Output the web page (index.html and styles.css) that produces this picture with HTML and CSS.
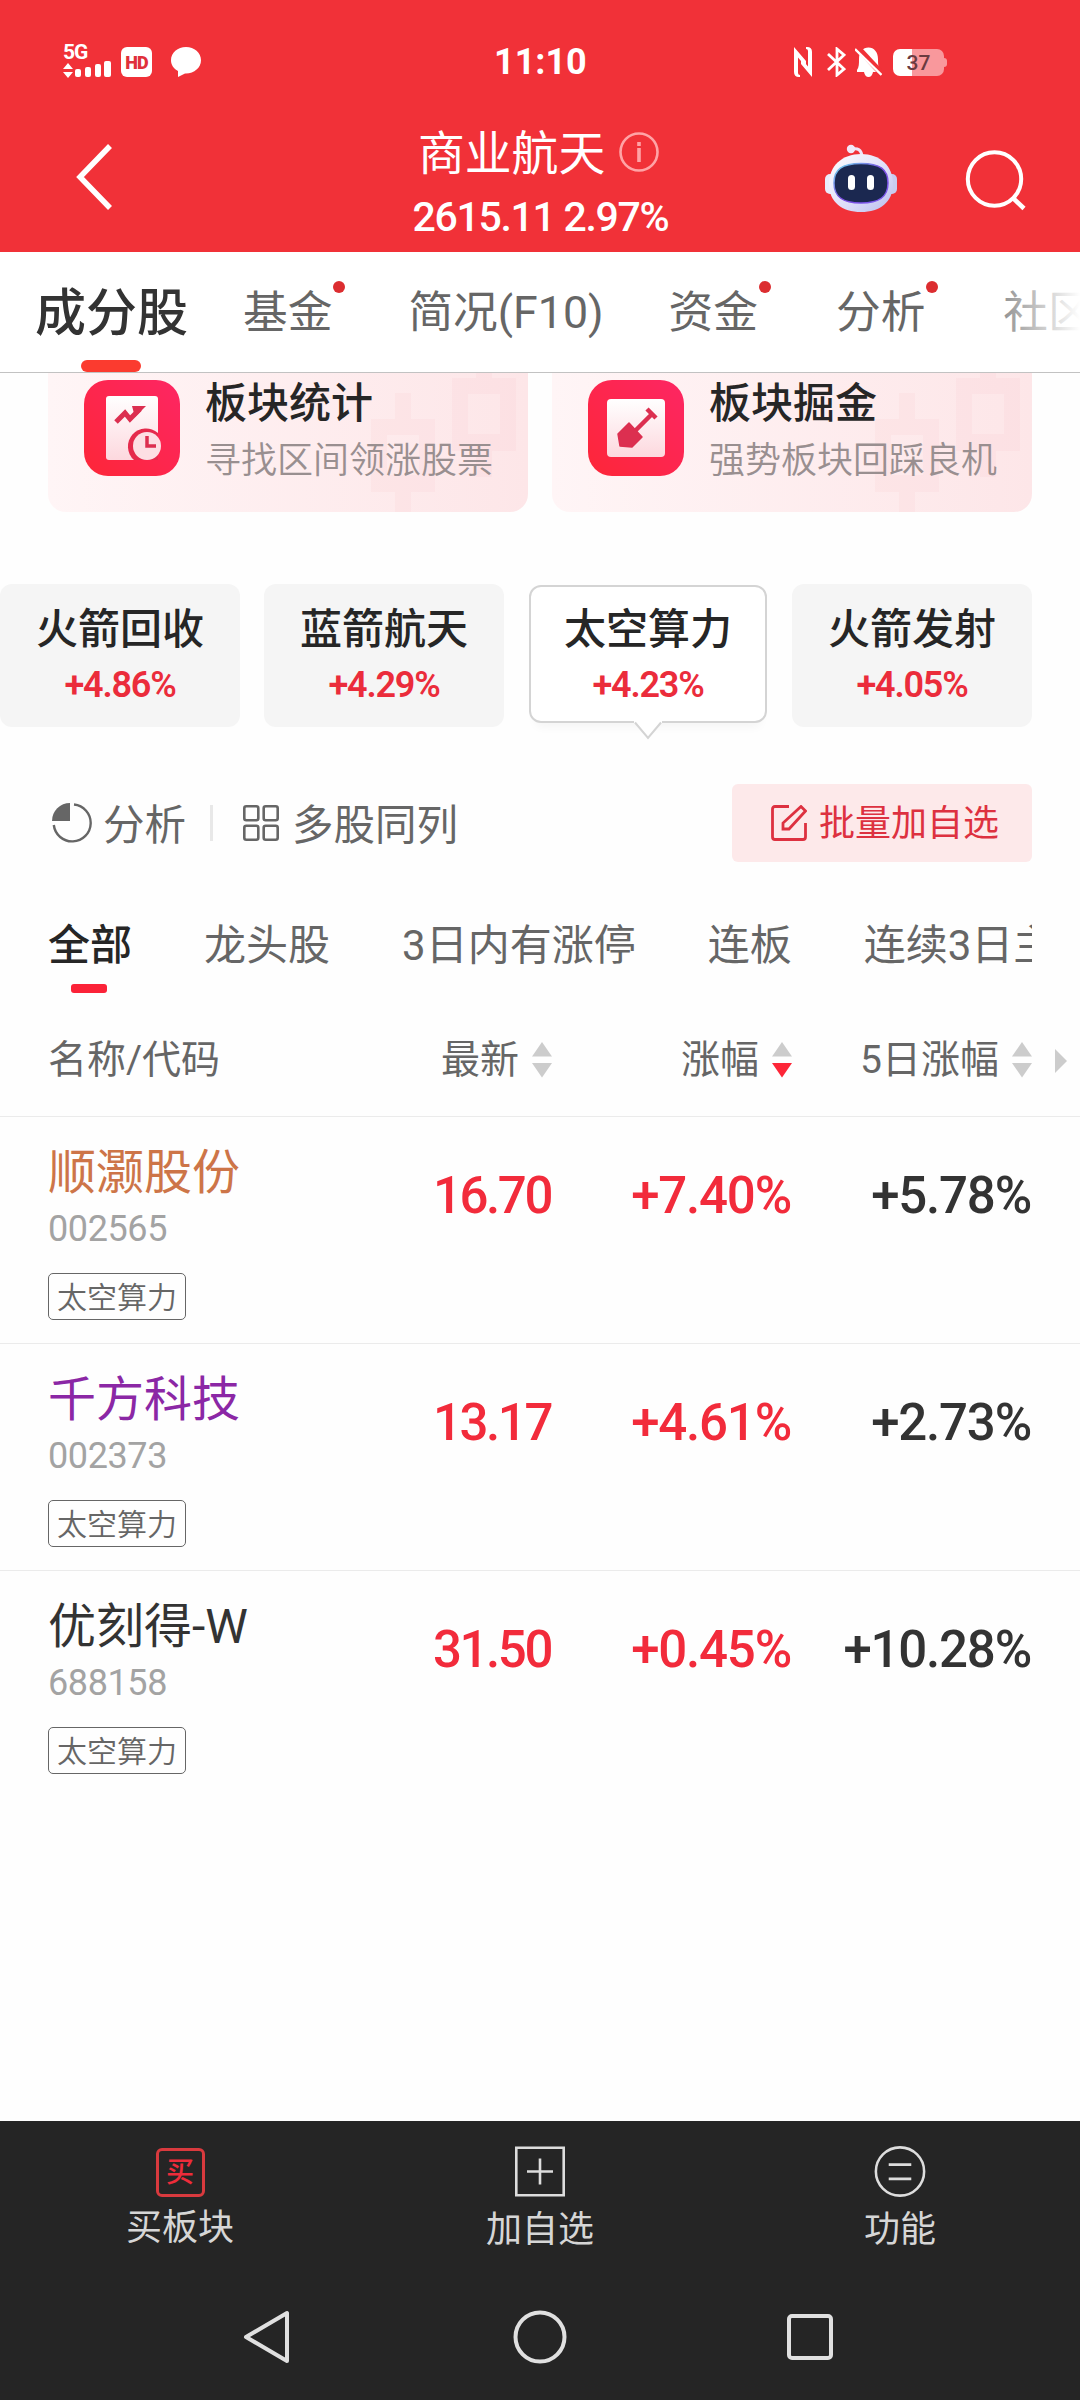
FILE: index.html
```html
<!DOCTYPE html>
<html lang="zh-CN">
<head>
    <meta charset="UTF-8">
    <meta name="viewport" content="width=device-width, initial-scale=1.0">
    <title>商业航天</title>
    <link rel="stylesheet" href="styles.css">
</head>
<body>
    <header class="header">
        <div class="status-bar">
            <div class="status-left">
                <div class="signal">
                    <span class="signal-type">5G</span>
                    <svg width="48" height="17" viewBox="0 -1 48 17" fill="#fff">
                        <path d="M0 7l5-6 5 6zM0 10h10l-5 6z"/>
                        <rect x="12" y="7" width="6" height="8" rx="2"/>
                        <rect x="22" y="5" width="6" height="10" rx="2"/>
                        <rect x="32" y="2" width="6" height="13" rx="2"/>
                        <rect x="41" y="-1" width="7" height="16" rx="2"/>
                    </svg>
                </div>
                <span class="hd">HD</span>
                <svg class="bubble" width="30" height="30" viewBox="0 0 30 30" fill="#fff">
                    <path d="M15 0C6.700 0 0 5.800 0 13.200c0 4.500 2.600 8.400 7 10.800V30l7-3.600h1c8.300 0 15-5.800 15-13.200S23.300 0 15 0z"/>
                </svg>
            </div>
            <span class="time">11:10</span>
            <div class="status-right">
                <svg width="18" height="30" viewBox="0 0 18 30" fill="#fff">
                    <path d="M0 0l12 14v6L4 10.500V26q0 2 2 2v2H5q-5 0-5-5zM18 30L7 17v-6l7 8.500V4q0-2-2-2V0h1q5 0 5 5z"/>
                </svg>
                <svg width="19" height="30" viewBox="0 0 19 30" fill="none" stroke="#fff" stroke-width="2.800">
                    <path d="M1 7l16 15-7 6V2l7 6L1 23"/>
                </svg>
                <svg width="27" height="30" viewBox="0 0 27 30">
                    <path d="M2 23c2-3 2-6 2-11C4 5 8 .5 13.500.5S23 5 23 12c0 5 0 8 2 11v2h-7q-1 5-4.500 5T9 25H2z" fill="#fff"/>
                    <path d="M1 -1l26 28" stroke="#f13138" stroke-width="6"/>
                    <path d="M0 2l26.500 26" stroke="#fff" stroke-width="2.400"/>
                </svg>
                <div class="battery">37</div>
            </div>
        </div>
        <div class="title-bar">
            <svg class="back" width="36" height="66" viewBox="0 0 36 66" fill="none" stroke="#fff" stroke-width="5.500">
                <path d="M34 2L4 33l30 31"/>
            </svg>
            <div class="title">
                <div class="title-name">
                    商业航天
                    <svg width="40" height="40" viewBox="0 0 40 40" fill="none" stroke="#ffa3a6" stroke-width="2.600">
                        <circle cx="20" cy="20" r="18.500"/>
                        <path d="M20 16v14M20 10v4" stroke-width="3.600"/>
                    </svg>
                </div>
                <div class="title-index">2615.11 2.97%</div>
            </div>
            <svg class="robot" width="72" height="68" viewBox="0 0 72 68">
                <defs>
                    <linearGradient id="shell" x1="0" y1="0" x2="1" y2="1">
                        <stop offset="0" stop-color="#fff"/>
                        <stop offset=".6" stop-color="#dcdcf8"/>
                        <stop offset="1" stop-color="#b9bdec"/>
                    </linearGradient>
                    <linearGradient id="rim" x1="0" y1="0" x2="1" y2="1">
                        <stop offset="0" stop-color="#6fe0f0"/>
                        <stop offset=".5" stop-color="#7a4be0"/>
                        <stop offset="1" stop-color="#7d5cf0"/>
                    </linearGradient>
                </defs>
                <path d="M27 5q9-2 10 7" fill="none" stroke="#f0e4f8" stroke-width="3"/>
                <circle cx="26" cy="5" r="4.200" fill="#f2e8f8"/>
                <rect x="0" y="30" width="12" height="20" rx="5" fill="#e9ecfb"/>
                <rect x="60" y="30" width="12" height="20" rx="5" fill="#c9ccf0"/>
                <path d="M36 10C17 10 4 22 4 40s13 28 32 28 32-10 32-28-13-30-32-30z" fill="url(#shell)"/>
                <path d="M36 19.500c-19 0-27 6-27 19.500s8 20 27 20 27-6.500 27-20-8-19.500-27-19.500z" fill="#1b2850" stroke="url(#rim)" stroke-width="1.500"/>
                <rect x="23" y="31" width="7" height="15" rx="3.500" fill="#fff"/>
                <rect x="42" y="31" width="7" height="15" rx="3.500" fill="#fff"/>
            </svg>
            <svg class="search" width="62" height="62" viewBox="0 0 62 62" fill="none" stroke="#fff" stroke-width="4">
                <circle cx="29.500" cy="30" r="26.700"/>
                <path d="M48 49l11 10.500" stroke-width="4.500"/>
            </svg>
        </div>
    </header>

    <nav class="tabs">
        <span class="tab active">成分股</span>
        <span class="tab dot">基金</span>
        <span class="tab profile">简况(F10)</span>
        <span class="tab dot">资金</span>
        <span class="tab dot">分析</span>
        <span class="tab">社区</span>
    </nav>

    <main>
        <section class="cards">
            <div class="card">
                <svg class="candles" width="145" height="139" viewBox="0 0 145 139" fill="#fbc4cb" fill-opacity=".15">
                    <path fill-rule="evenodd" d="M0 46h64v73H0zM16 62v40h32V62zM24 20h16v26H24zM24 119h16v20H24z"/>
                    <path fill-rule="evenodd" d="M81 5h64v73H81zM97 21v40h32V21zM105 0h16v5h-16zM105 78h16v26h-16z"/>
                </svg>
                <svg width="96" height="96" viewBox="0 0 96 96">
                    <defs>
                        <linearGradient id="red" x1="0" y1="1" x2="1" y2="0">
                            <stop offset="0" stop-color="#fd2638"/>
                            <stop offset="1" stop-color="#fd2663"/>
                        </linearGradient>
                        <linearGradient id="paper" x1="0" y1="0" x2="0" y2="1">
                            <stop offset="0" stop-color="#fff"/>
                            <stop offset="1" stop-color="#fdd8de"/>
                        </linearGradient>
                    </defs>
                    <rect width="96" height="96" rx="24" fill="url(#red)"/>
                    <rect x="22" y="16" width="52" height="64" rx="3" fill="url(#paper)"/>
                    <path d="M32 42l9-9 5 6 10-10" fill="none" stroke="#dc2f50" stroke-width="5"/>
                    <path d="M48 26h14L51 37z" fill="#dc2f50"/>
                    <path d="M50 80a18 18 0 1 1 24-27v27z" fill="#e52a4c"/>
                    <circle cx="63" cy="66" r="14" fill="#fddfe4"/>
                    <path d="M63 56v10h9" fill="none" stroke="#dc2f50" stroke-width="3.500"/>
                </svg>
                <div class="card-text">
                    <div class="card-title">板块统计</div>
                    <div class="card-desc">寻找区间领涨股票</div>
                </div>
            </div>
            <div class="card">
                <svg class="candles" width="145" height="139" viewBox="0 0 145 139" fill="#fbc4cb" fill-opacity=".15">
                    <path fill-rule="evenodd" d="M0 46h64v73H0zM16 62v40h32V62zM24 20h16v26H24zM24 119h16v20H24z"/>
                    <path fill-rule="evenodd" d="M81 5h64v73H81zM97 21v40h32V21zM105 0h16v5h-16zM105 78h16v26h-16z"/>
                </svg>
                <svg width="96" height="96" viewBox="0 0 96 96">
                    <rect width="96" height="96" rx="24" fill="url(#red)"/>
                    <rect x="19" y="19" width="58" height="58" rx="4" fill="url(#paper)"/>
                    <path d="M46 52l18-18M59 29l9 9" fill="none" stroke="#dc2f50" stroke-width="4.500"/>
                    <path d="M41 43l13 14-10 10-12-1-2-12z" fill="#dc2f50" stroke="#dc2f50" stroke-width="1.500" stroke-linejoin="round"/>
                </svg>
                <div class="card-text">
                    <div class="card-title">板块掘金</div>
                    <div class="card-desc">强势板块回踩良机</div>
                </div>
            </div>
        </section>

        <section class="chips">
            <div class="chip"><b>火箭回收</b><span>+4.86%</span></div>
            <div class="chip"><b>蓝箭航天</b><span>+4.29%</span></div>
            <div class="chip selected">
                <b>太空算力</b><span>+4.23%</span>
                <svg class="pointer" width="28" height="19" viewBox="0 0 28 19">
                    <path d="M0 0h28v2h-1L14 17 1 2H0z" fill="#fff"/>
                    <path d="M1 1.500L14 17 27 1.500" fill="none" stroke="#d4d4d4" stroke-width="2"/>
                </svg>
            </div>
            <div class="chip"><b>火箭发射</b><span>+4.05%</span></div>
        </section>

        <section class="toolbar">
            <svg width="40" height="40" viewBox="0 0 40 40">
                <path d="M18 18H0A18 18 0 0 1 18 0z" fill="#666"/>
                <path d="M22 1.500A18.500 18.500 0 1 1 1.800 22" fill="none" stroke="#666" stroke-width="2.400"/>
            </svg>
            <span class="tool-label analysis">分析</span>
            <i class="divider"></i>
            <svg width="36" height="36" viewBox="0 0 36 36" fill="none" stroke="#666" stroke-width="2.600">
                <rect x="1.300" y="1.300" width="14" height="14" rx="2"/>
                <rect x="20.700" y="1.300" width="14" height="14" rx="2"/>
                <rect x="1.300" y="20.700" width="14" height="14" rx="2"/>
                <rect x="20.700" y="20.700" width="14" height="14" rx="2"/>
            </svg>
            <span class="tool-label multi">多股同列</span>
            <div class="batch-button">
                <svg width="36" height="36" viewBox="0 0 36 36" fill="none" stroke="#dd3140" stroke-width="2.800">
                    <path d="M18 1.500H4Q1.500 1.500 1.500 4v28q0 2.500 2.500 2.500h28q2.500 0 2.500-2.500V18"/>
                    <path d="M12 24v-6L30 1.500l4.500 4.500L18 24z"/>
                </svg>
                <span>批量加自选</span>
            </div>
        </section>

        <section class="filters">
            <span class="filter active">全部</span>
            <span class="filter">龙头股</span>
            <span class="filter">3日内有涨停</span>
            <span class="filter">连板</span>
            <span class="filter">连续3日主力</span>
        </section>

        <section class="table">
            <div class="row head">
                <div class="col">名称/代码</div>
                <div class="col num">最新<svg width="20" height="36" viewBox="0 0 20 36" fill="#ccc"><path d="M0 14.500L10 0l10 14.500z"/><path d="M0 21h20L10 35.500z"/></svg></div>
                <div class="col num">涨幅<svg width="20" height="36" viewBox="0 0 20 36" fill="#ccc"><path d="M0 14.500L10 0l10 14.500z"/><path d="M0 21h20L10 35.500z" fill="#fd2638"/></svg></div>
                <div class="col num">5日涨幅<svg width="20" height="36" viewBox="0 0 20 36" fill="#ccc"><path d="M0 14.500L10 0l10 14.500z"/><path d="M0 21h20L10 35.500z"/></svg></div>
                <svg class="more" width="12" height="24" viewBox="0 0 12 24" fill="#ccc"><path d="M0 0l12 12L0 24z"/></svg>
            </div>
            <div class="row">
                <div class="col">
                    <div class="name orange">顺灏股份</div>
                    <div class="code">002565</div>
                    <span class="tag">太空算力</span>
                </div>
                <div class="col num red">16.70</div>
                <div class="col num percent red">+7.40%</div>
                <div class="col num percent">+5.78%</div>
            </div>
            <div class="row">
                <div class="col">
                    <div class="name purple">千方科技</div>
                    <div class="code">002373</div>
                    <span class="tag">太空算力</span>
                </div>
                <div class="col num red">13.17</div>
                <div class="col num percent red">+4.61%</div>
                <div class="col num percent">+2.73%</div>
            </div>
            <div class="row">
                <div class="col">
                    <div class="name">优刻得-W</div>
                    <div class="code">688158</div>
                    <span class="tag">太空算力</span>
                </div>
                <div class="col num red">31.50</div>
                <div class="col num percent red">+0.45%</div>
                <div class="col num percent">+10.28%</div>
            </div>
        </section>
    </main>

    <footer class="footer">
        <div class="actions">
            <div class="action">
                <span class="buy-icon">买</span>
                买板块
            </div>
            <div class="action low">
                <svg width="50" height="50" viewBox="0 0 50 50" fill="none" stroke="#ddd" stroke-width="2.600">
                    <path d="M1.300 1.300h47.400v47.400H1.300zM25 12v26M12 25h26"/>
                </svg>
                加自选
            </div>
            <div class="action low">
                <svg width="52" height="52" viewBox="0 0 52 52" fill="none" stroke="#ddd" stroke-width="2.600">
                    <circle cx="26" cy="26" r="24.600"/>
                    <path d="M14.500 19h23M14.500 33.500h23" stroke-width="3"/>
                </svg>
                功能
            </div>
        </div>
        <div class="system-nav">
            <svg width="54" height="54" viewBox="0 0 54 54" fill="none" stroke="#e0e0e0" stroke-width="4" stroke-linejoin="round">
                <path d="M44 3v48L3 27z"/>
            </svg>
            <svg width="54" height="54" viewBox="0 0 54 54" fill="none" stroke="#e0e0e0" stroke-width="4">
                <circle cx="27" cy="27" r="24.500"/>
            </svg>
            <svg width="54" height="54" viewBox="0 0 54 54" fill="none" stroke="#e0e0e0" stroke-width="4">
                <rect x="6" y="6" width="42" height="42" rx="3"/>
            </svg>
        </div>
    </footer>
</body>
</html>
```
FILE: styles.css
```css
/* Global Styles */
* {
    box-sizing: border-box;
}

body {
    font-family: Roboto, "Noto Sans CJK SC", sans-serif;
    font-weight: 400;
    margin: 0;
    width: 1080px;
    height: 2400px;
    display: flex;
    flex-direction: column;
    background: #fefefe;
    color: #333;
    overflow: hidden;
    white-space: nowrap;
}

svg {
    display: block;
    flex: none;
}

/* Header */
.header {
    height: 252px;
    background: #f13138;
    color: #fff;
}

.status-bar {
    height: 124px;
    display: grid;
    grid-template-columns: 1fr auto 1fr;
    align-items: center;
    padding: 0 133px 0 63px;
}

.status-left,
.status-right {
    display: flex;
    align-items: center;
}

.status-left {
    width: 361px;
}

.signal {
    width: 48px;
    height: 34px;
    margin-top: -2px;
}

.signal-type {
    display: block;
    font-size: 21px;
    font-weight: 700;
    line-height: 17px;
    letter-spacing: -1px;
}

.hd {
    width: 31px;
    height: 30px;
    margin-left: 10px;
    border-radius: 6px;
    background: #fff;
    color: #e0303a;
    font-size: 18px;
    font-weight: 900;
    line-height: 31px;
    letter-spacing: -1px;
    text-align: center;
}

.bubble {
    margin-left: 19px;
}

.time {
    font-size: 36px;
    font-weight: 700;
    line-height: 40px;
    margin-left: 70px;
}

.status-right {
    justify-content: flex-end;
    gap: 11px;
}

.status-right svg:nth-child(1) {
    margin-right: 4px;
}

.status-right svg:nth-child(2) {
    margin-right: -2px;
}

.battery {
    position: relative;
    width: 51px;
    height: 27px;
    margin-right: 3px;
    border-radius: 7px;
    background: linear-gradient(90deg, #fff 37%, #f9989c 37%);
    color: #6b3b40;
    font-size: 21px;
    font-weight: 500;
    line-height: 28px;
    text-align: center;
}

.battery::after {
    content: "";
    position: absolute;
    right: -3px;
    top: 9px;
    width: 3px;
    height: 9px;
    border-radius: 0 3px 3px 0;
    background: #f9989c;
}

.title-bar {
    height: 128px;
    display: flex;
    align-items: flex-start;
    padding-left: 76px;
}

.back {
    margin-top: 20px;
}

.title {
    width: 300px;
    margin-left: 278px;
}

.title-name {
    display: flex;
    align-items: center;
    gap: 14px;
    padding-left: 28px;
    font-size: 46.800px;
    line-height: 60px;
}

.title-name svg {
    margin-top: -4px;
}

.title-index {
    margin-top: 9px;
    font-size: 41px;
    font-weight: 500;
    line-height: 48px;
    letter-spacing: -1.300px;
    text-align: center;
    padding-left: 1px;
}

.robot {
    margin: 20px 0 0 135px;
}

.search {
    margin: 25px 0 0 68px;
}

/* Tabs */
.tabs {
    position: relative;
    height: 121px;
    display: flex;
    align-items: center;
    padding: 2px 0 0 35px;
    border-bottom: 1px solid #c2c2c2;
    background: #fff;
    color: #666;
    overflow: hidden;
}

.tabs::after {
    content: "";
    position: absolute;
    right: 0;
    top: 0;
    width: 110px;
    height: 120px;
    background: linear-gradient(90deg, rgba(255, 255, 255, 0), #fff);
}

.tab {
    position: relative;
    font-size: 44.700px;
    line-height: 60px;
    margin-right: 78px;
}

.tab.active {
    padding-top: 2px;
    font-size: 51px;
    font-weight: 500;
    color: #333;
    margin-right: 55px;
}

.tab.active + .tab {
    margin-right: 76px;
}

.tab.profile {
    margin-right: 65px;
}

.tab.active::after {
    content: "";
    position: absolute;
    left: 46px;
    top: 78px;
    width: 60px;
    height: 12px;
    border-radius: 6px;
    background: #fb3b2f;
}

.tab.dot::after {
    content: "";
    position: absolute;
    right: -13px;
    top: -2px;
    width: 12px;
    height: 12px;
    border-radius: 50%;
    background: #dc2d30;
}

main {
    flex: 1;
}

/* Entry cards, their top is scrolled under the tabs */
.cards {
    display: flex;
    gap: 24px;
    padding: 0 48px;
}

.card {
    position: relative;
    width: 480px;
    height: 139px;
    display: flex;
    padding: 7px 0 0 36px;
    border-radius: 0 0 18px 18px;
    background: linear-gradient(90deg, #fff5f6, #fde6e8);
    overflow: hidden;
}

.candles {
    position: absolute;
    right: 12px;
    top: 0;
}

.card-text {
    position: relative;
    margin-left: 25px;
}

.card-title {
    font-size: 42px;
    font-weight: 500;
    line-height: 48px;
    color: #262626;
}

.card-desc {
    margin-top: 12px;
    font-size: 36px;
    font-weight: 350;
    line-height: 42px;
    color: #998f90;
}

/* Topic chips */
.chips {
    display: flex;
    gap: 24px;
    margin-top: 72px;
}

.chip {
    position: relative;
    width: 240px;
    height: 143px;
    padding-top: 21px;
    border-radius: 12px;
    background: #f5f5f5;
    text-align: center;
}

.chip b {
    display: block;
    font-size: 42px;
    font-weight: 500;
    line-height: 50px;
    color: #262626;
}

.chip span {
    display: block;
    margin-top: 10px;
    font-size: 36px;
    font-weight: 600;
    line-height: 40px;
    letter-spacing: -1.200px;
    color: #eb2c3b;
}

.chip.selected {
    width: 238px;
    height: 138px;
    margin: 1px;
    padding-top: 18px;
    border: 2px solid #d4d4d4;
    background: #fff;
    box-shadow: 0 10px 10px -6px rgba(0, 0, 0, .04);
}

.pointer {
    position: absolute;
    left: 103px;
    top: 134px;
}

/* Toolbar */
.toolbar {
    display: flex;
    align-items: center;
    height: 78px;
    margin-top: 57px;
    padding: 0 48px 0 52px;
}

.tool-label {
    padding-top: 5px;
    font-size: 41.500px;
    line-height: 50px;
    color: #666;
}

.analysis {
    margin-left: 11px;
}

.divider {
    width: 3px;
    height: 36px;
    margin: 0 30px 0 24px;
    background: #e8e8e8;
}

.multi {
    margin-left: 13px;
}

.batch-button {
    display: flex;
    align-items: center;
    gap: 12px;
    width: 300px;
    height: 78px;
    margin-left: auto;
    padding-left: 39px;
    border-radius: 6px;
    background: #fde9ea;
    color: #dd3140;
    font-size: 36px;
    line-height: 42px;
}

.batch-button span {
    margin-top: 2px;
}

/* Filters */
.filters {
    display: flex;
    gap: 72px;
    margin: 46px 48px 0;
    height: 86px;
    overflow: hidden;
}

.filter {
    position: relative;
    flex: none;
    padding-top: 3px;
    font-size: 42px;
    font-weight: 370;
    line-height: 70px;
    color: #666;
}

.filter.active {
    font-weight: 500;
    color: #262626;
}

.filter.active::after {
    content: "";
    position: absolute;
    left: 23px;
    top: 76px;
    width: 36px;
    height: 9px;
    border-radius: 3px;
    background: #fb2238;
}

/* Stock table */
.row {
    display: grid;
    grid-template-columns: 264px 240px 240px 240px;
    height: 227px;
    padding: 27px 48px 0;
    border-bottom: 1px solid #ebebeb;
}

.row:last-child {
    border-bottom: none;
}

.row.head {
    position: relative;
    height: 123px;
    padding-top: 0;
    align-items: center;
}

.col.num {
    padding: 25px 1px 0 0;
    text-align: right;
    font-size: 51px;
    font-weight: 500;
    line-height: 54px;
    letter-spacing: -2.400px;
}

.col.percent {
    letter-spacing: -1.200px;
}

.head .col,
.head .col.num {
    display: flex;
    align-items: center;
    padding: 10px 0 0;
    font-size: 39px;
    font-weight: 370;
    letter-spacing: 0;
    line-height: 50px;
    color: #666;
}

.head .col.num {
    justify-content: flex-end;
    gap: 13px;
}

.more {
    position: absolute;
    right: 13px;
    top: 55px;
}

.name {
    font-size: 48px;
    line-height: 58px;
}

.code {
    margin-top: 6px;
    font-size: 36px;
    line-height: 42px;
    letter-spacing: -.400px;
    color: #a3a3a3;
}

.tag {
    display: block;
    width: 138px;
    height: 47px;
    margin-top: 23px;
    border: 1px solid #666;
    border-radius: 5px;
    font-size: 30px;
    font-weight: 350;
    line-height: 47px;
    text-align: center;
    color: #666;
}

.red {
    color: #f22b3b;
}

.orange {
    color: #cd7548;
}

.purple {
    color: #8b27a5;
}

/* Footer */
.footer {
    height: 279px;
    background: #252525;
    color: #d6d6d6;
}

.actions {
    display: flex;
    height: 163px;
}

.action {
    flex: 1;
    display: flex;
    flex-direction: column;
    align-items: center;
    gap: 10px;
    padding-top: 27px;
    font-size: 36px;
    line-height: 42px;
}

.action.low {
    padding-top: 25px;
    gap: 12px;
}

.action.low svg {
    height: 51px;
}

.buy-icon {
    width: 49px;
    height: 49px;
    border: 3px solid #d93a3e;
    border-radius: 6px;
    color: #ee2c3a;
    font-size: 28px;
    font-weight: 500;
    line-height: 44px;
    text-align: center;
}

.system-nav {
    display: flex;
    justify-content: center;
    gap: 216px;
    padding-top: 26px;
}
```
